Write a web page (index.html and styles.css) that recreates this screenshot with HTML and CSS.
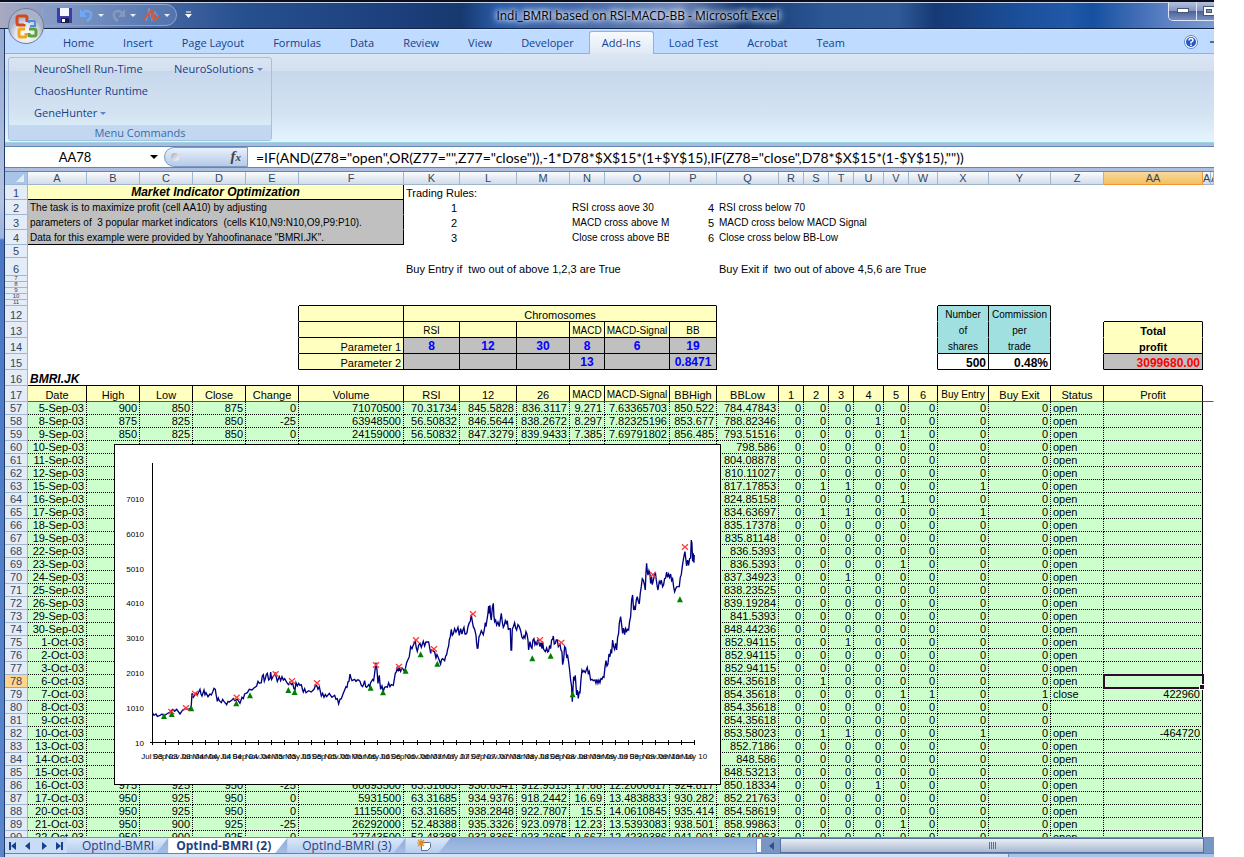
FILE: index.html
```html
<!DOCTYPE html>
<html lang="en">
<head>
  <meta charset="UTF-8" />
  <meta name="viewport" content="width=device-width, initial-scale=1.0"/>
  <title>Indi_BMRI based on RSI-MACD-BB - Microsoft Excel</title>
  <link rel="stylesheet" href="styles.css">
</head>
<body>
<div class="window">

<!-- Title bar -->
<header class="titlebar">
  <div class="quick">
    <button class="icon-btn" aria-label="Save">
      <svg width="15" height="15" viewBox="0 0 15 15"><path d="M0 0h15v15H1l-1-1z" fill="#3b3fa5"/><path d="M3 0h9v8H3z" fill="#f4f7fd"/><path d="M4 10h8v5H4z" fill="#1c1c4c"/><path d="M5 11h3v3H5z" fill="#fff"/></svg>
    </button>
    <button class="icon-btn" aria-label="Undo">
      <svg width="13" height="14" viewBox="0 0 13 14"><path d="M3 5c3-4 9-2 8 3-.4 2-2 4-4 5" fill="none" stroke="#6fa8f5" stroke-width="2.600"/><path d="M0 1v8h7z" fill="#6fa8f5"/></svg>
      <svg width="6" height="5" viewBox="0 0 6 5"><path d="M0 1h6L3 4z" fill="#e8eefa"/></svg>
    </button>
    <button class="icon-btn" aria-label="Redo">
      <svg width="13" height="14" viewBox="0 0 13 14"><path d="M10 5C7 1 1 3 2 8c.4 2 2 4 4 5" fill="none" stroke="#8399c0" stroke-width="2.600"/><path d="M13 1v8H6z" fill="#8399c0"/></svg>
      <svg width="6" height="5" viewBox="0 0 6 5"><path d="M0 1h6L3 4z" fill="#e8eefa"/></svg>
    </button>
    <button class="icon-btn" aria-label="Indicator">
      <svg width="15" height="14" viewBox="0 0 15 14"><path d="M2 13L5 1l3 11 3-8 3 5" fill="none" stroke="#6f9be6" stroke-width="1.400"/><path d="M0 12l4-6 3-4 1 8 3 2 4-4M9 1l1 8" fill="none" stroke="#e0562c" stroke-width="1.800"/></svg>
      <svg width="6" height="5" viewBox="0 0 6 5"><path d="M0 1h6L3 4z" fill="#e8eefa"/></svg>
    </button>
  </div>
  <button class="icon-btn customize" aria-label="Customize toolbar">
    <svg width="7" height="8" viewBox="0 0 7 8"><path d="M1 1h5" stroke="#fff"/><path d="M0 3h7L3.500 7z" fill="#fff"/></svg>
  </button>
  <h1>Indi_BMRI based on RSI-MACD-BB - Microsoft Excel</h1>
  <div class="win-buttons">
    <button aria-label="Minimize"><svg width="12" height="6" viewBox="0 0 12 6"><rect x=".5" y=".5" width="11" height="4" fill="#fff" stroke="#4a5573"/></svg></button>
    <button aria-label="Maximize"><svg width="13" height="10" viewBox="0 0 13 10"><rect x=".5" y=".5" width="12" height="9" fill="#fff" stroke="#4a5573"/><rect x="3.500" y="3.500" width="5" height="3" fill="#7f95bd" stroke="#4a5573"/></svg></button>
  </div>
</header>
<button class="office" aria-label="Office Button">
  <svg width="36" height="36" viewBox="0 0 36 36">
    <defs><radialGradient id="orb" cx="50%" cy="75%"><stop offset="0" stop-color="#fff"/><stop offset=".6" stop-color="#e3e6ee"/><stop offset="1" stop-color="#a9b2c8"/></radialGradient></defs>
    <circle cx="18" cy="18" r="17.500" fill="url(#orb)" stroke="#6f7c98"/>
    <path d="M16 16v1h-5q-2 0-2-2V10q0-2 2-2h6q2 0 2 2v4" fill="none" stroke="#d5481b" stroke-width="3"/>
    <path d="M21 15v-2h5q1 0 1 1v4h-5" fill="none" stroke="#4a8fd8" stroke-width="2"/>
    <path d="M17 21h-5q-1 0-1 1v5q0 2 2 2h4q1 0 1-1v-3" fill="none" stroke="#f3a81c" stroke-width="3"/>
    <path d="M21 21h5q2 0 2 2v3q0 2-2 2h-4q-1 0-1-1v-2" fill="none" stroke="#5ba23a" stroke-width="3"/>
  </svg>
</button>

<!-- Ribbon -->
<nav class="tabs">
  <a href="#">Home</a>
  <a href="#">Insert</a>
  <a href="#">Page Layout</a>
  <a href="#">Formulas</a>
  <a href="#">Data</a>
  <a href="#">Review</a>
  <a href="#">View</a>
  <a href="#">Developer</a>
  <a href="#" class="active">Add-Ins</a>
  <a href="#">Load Test</a>
  <a href="#">Acrobat</a>
  <a href="#">Team</a>
  <span class="tabs-right">
    <button class="icon-btn" aria-label="Help">
      <svg width="14" height="14" viewBox="0 0 14 14"><circle cx="7" cy="7" r="6.500" fill="#fff" stroke="#5d86c8"/><circle cx="7" cy="7" r="5" fill="#2458c4"/><path d="M5 5.500q0-2 2-2t2 1.800Q9 6.500 7 7.200V8.500M7 9.500v1.500" fill="none" stroke="#fff" stroke-width="1.500"/></svg>
    </button>
    <button class="icon-btn mini" aria-label="Minimize workbook"></button>
  </span>
</nav>
<div class="ribbon">
  <section class="group">
    <div class="commands">
      <button>NeuroShell Run-Time</button>
      <button>NeuroSolutions <i class="arrow"></i></button>
      <button>ChaosHunter Runtime</button>
      <button class="first-col">GeneHunter <i class="arrow"></i></button>
    </div>
    <h2>Menu Commands</h2>
  </section>
</div>

<!-- Formula bar -->
<div class="formula-bar">
  <input class="name-box" type="text" value="AA78" aria-label="Name Box" />
  <button class="name-drop" aria-label="Name list"><i class="arrow black"></i></button>
  <div class="fx"><i class="knob"></i><button aria-label="Insert Function">f<small>x</small></button></div>
  <input class="formula" type="text" aria-label="Formula" value='=IF(AND(Z78="open",OR(Z77="",Z77="close")),-1*D78*$X$15*(1+$Y$15),IF(Z78="close",D78*$X$15*(1-$Y$15),""))' />
</div>

<!-- Worksheet -->
<main class="sheet">
<table class="grid">
  <colgroup>
    <col class="w-head"><col class="w-date"><col class="w53"><col class="w53"><col class="w53"><col class="w53"><col class="w-vol">
    <col class="w56"><col class="w57"><col class="w53"><col class="w35"><col class="w65"><col class="w47"><col class="w62">
    <col class="w25"><col class="w25"><col class="w25"><col class="w30"><col class="w25"><col class="w29">
    <col class="w51"><col class="w62"><col class="w53"><col class="w99"><col class="w8"><col>
  </colgroup>
  <thead>
    <tr class="letters">
      <th class="corner"><i></i></th>
      <th>A</th><th>B</th><th>C</th><th>D</th><th>E</th><th>F</th><th>K</th><th>L</th><th>M</th><th>N</th><th>O</th><th>P</th><th>Q</th>
      <th>R</th><th>S</th><th>T</th><th>U</th><th>V</th><th>W</th><th>X</th><th>Y</th><th>Z</th><th class="sel">AA</th><th class="cut">AB</th><th class="cut">AC</th>
    </tr>
  </thead>
  <tbody>
    <tr class="r15"><th>1</th><td colspan="6" class="yellow title bb br">Market Indicator Optimization</td><td colspan="3">Trading Rules:</td><td colspan="16"></td></tr>
    <tr class="r15"><th>2</th><td colspan="6" class="gray br">The task is to maximize profit (cell AA10) by adjusting</td><td class="num">1</td><td></td><td></td><td colspan="2" class="small">RSI cross aove 30</td><td class="num">4</td><td colspan="8" class="small">RSI cross below 70</td><td colspan="5"></td></tr>
    <tr class="r15"><th>3</th><td colspan="6" class="gray br">parameters of&nbsp; 3 popular market indicators&nbsp; (cells K10,N9:N10,O9,P9:P10).</td><td class="num">2</td><td></td><td></td><td colspan="2" class="small">MACD cross above MACD Signal</td><td class="num">5</td><td colspan="8" class="small">MACD cross below MACD Signal</td><td colspan="5"></td></tr>
    <tr class="r15"><th>4</th><td colspan="6" class="gray bb br">Data for this example were provided by Yahoofinanace "BMRI.JK".</td><td class="num">3</td><td></td><td></td><td colspan="2" class="small">Close cross above BB-High</td><td class="num">6</td><td colspan="8" class="small">Close cross below BB-Low</td><td colspan="5"></td></tr>
    <tr class="r13"><th>5</th><td colspan="25"></td></tr>
    <tr class="r18"><th>6</th><td colspan="6"></td><td colspan="6">Buy Entry if&nbsp; two out of above 1,2,3 are True</td><td colspan="13">Buy Exit if&nbsp; two out of above 4,5,6 are True</td></tr>
    <tr class="r6"><th>7</th><td colspan="25"></td></tr>
    <tr class="r6"><th>8</th><td colspan="25"></td></tr>
    <tr class="r6"><th>9</th><td colspan="25"></td></tr>
    <tr class="r6"><th>10</th><td colspan="25"></td></tr>
    <tr class="r6"><th>11</th><td colspan="5"></td><td colspan="7" class="bb"></td><td colspan="7"></td><td colspan="2" class="bb"></td><td colspan="4"></td></tr>
    <tr class="r16"><th>12</th><td colspan="5" class="br"></td><td class="yellow bb br"></td><td colspan="6" class="yellow bb br mid">Chromosomes</td><td colspan="7" class="br"></td><td class="teal br mid">Number</td><td class="teal br mid">Commission</td><td></td><td class="bb"></td><td colspan="2"></td></tr>
    <tr class="r16"><th>13</th><td colspan="5" class="br"></td><td class="yellow bb br"></td><td class="yellow bb br mid small">RSI</td><td class="yellow bb br"></td><td class="yellow bb br"></td><td class="yellow bb br mid small">MACD</td><td class="yellow bb br mid small">MACD-Signal</td><td class="yellow bb br mid small">BB</td><td colspan="7" class="br"></td><td class="teal br mid">of</td><td class="teal br mid">per</td><td class="br"></td><td class="yellow br mid strong">Total</td><td colspan="2"></td></tr>
    <tr class="r16"><th>14</th><td colspan="5" class="br"></td><td class="yellow bb br num">Parameter 1</td><td class="param">8</td><td class="param">12</td><td class="param">30</td><td class="param">8</td><td class="param">6</td><td class="param">19</td><td colspan="7" class="br"></td><td class="teal bb br mid">shares</td><td class="teal bb br mid">trade</td><td class="br"></td><td class="yellow bb br mid strong">profit</td><td colspan="2"></td></tr>
    <tr class="r16"><th>15</th><td colspan="5" class="br"></td><td class="yellow bb br num">Parameter 2</td><td class="param"></td><td class="param"></td><td class="param"></td><td class="param">13</td><td class="param"></td><td class="param">0.8471</td><td colspan="7" class="br"></td><td class="big bb br num">500</td><td class="big bb br num">0.48%</td><td class="br"></td><td class="gray big red bb br num">3099680.00</td><td colspan="2"></td></tr>
    <tr class="r16"><th>16</th><td colspan="23" class="symbol bb">BMRI.JK</td><td colspan="2"></td></tr>
    <tr class="r16 heads"><th>17</th><td>Date</td><td>High</td><td>Low</td><td>Close</td><td>Change</td><td>Volume</td><td>RSI</td><td>12</td><td>26</td><td class="small">MACD</td><td class="small">MACD-Signal</td><td>BBHigh</td><td>BBLow</td><td>1</td><td>2</td><td>3</td><td>4</td><td>5</td><td>6</td><td class="small">Buy Entry</td><td>Buy Exit</td><td>Status</td><td>Profit</td><td class="plain" colspan="2"></td></tr>
  </tbody>
  <tbody id="rows"></tbody>
</table>

<!-- Price chart floating over the cells -->
<svg class="chart" width="607" height="341" viewBox="0 0 607 341" role="img" aria-label="BMRI.JK price">
  <rect x=".5" y=".5" width="606" height="340" fill="#fff" stroke="#000"/>
  <path d="M38.500 19V301M36 298.500H581" stroke="#000" fill="none"/>
  <g id="yLabels"></g>
  <g id="xLabels"></g>
  <g transform="translate(0 196) scale(.3333)">
    <g transform="translate(-342 0)">
    <polyline class="price" points="457,218 462,226 468,222 472,229 480,226 486,222 492,228 500,222 510,216 518,208 524,214 530,208 540,222 548,210 556,206 565,208 572,204 574,195 576,160 580,172 588,160 592,165 600,148 603,162 606,168 612,150 615,164 618,158 624,170 630,162 634,165 638,156 642,145 646,148 648,162 652,184 655,174 658,182 664,188 668,178 672,184 680,194 684,184 688,186 696,180 700,176 704,182 712,178 720,190 726,172 730,176 734,162 742,158 748,148 756,150 762,144 770,138 774,124 778,130 784,128 787,108 790,104 793,124 796,116 799,104 802,100 806,120 810,116 812,96 815,118 818,112 826,100 832,124 838,110 842,122 846,110 850,120 854,116 862,130 866,134 870,126 874,134 878,130 882,146 885,150 888,128 892,138 896,130 900,136 904,134 908,150 910,156 914,146 918,158 926,152 934,156 942,148 946,138 950,136 954,148 958,140 964,168 968,160 972,172 976,164 980,170 988,160 992,166 996,172 1004,166 1008,178 1012,176 1016,192 1020,178 1024,176 1030,160 1034,150 1038,140 1041,142 1044,126 1047,124 1050,102 1053,114 1056,122 1064,118 1068,124 1072,120 1076,120 1080,124 1084,136 1088,140 1091,132 1094,122 1097,140 1100,142 1106,134 1109,140 1112,128 1118,118 1121,122 1124,100 1128,68 1131,90 1134,130 1138,106 1140,130 1142,148 1146,138 1150,154 1154,142 1158,140 1162,142 1166,128 1170,140 1174,134 1180,136 1186,100 1189,96 1192,80 1195,94 1198,84 1202,94 1206,84 1210,88 1214,96 1220,68 1228,50 1232,20 1236,26 1240,15 1246,4 1249,24 1252,34 1256,16 1260,10 1264,22 1270,4 1274,18 1278,6 1286,6 1289,22 1292,40 1295,30 1298,32 1304,36 1308,54 1311,44 1314,50 1322,72 1325,58 1328,56 1334,62 1337,48 1340,44 1343,28 1346,18 1348,0 1351,-10 1354,-32 1357,-14 1360,-18 1364,-34 1368,-24 1371,-30 1374,-38 1378,-14 1382,-34 1386,-18 1389,-30 1392,-38 1395,-18 1398,-18 1401,-22 1404,-40 1408,-52 1411,-56 1414,-76 1417,-56 1420,-40 1424,-32 1428,-15 1430,10 1432,25 1434,24 1437,-10 1440,-15 1444,-28 1447,-22 1450,-16 1453,-30 1456,-52 1458,-40 1461,-60 1464,-80 1466,-102 1468,-80 1470,-104 1472,-70 1474,-60 1477,-96 1480,-110 1482,-70 1484,-55 1487,-60 1490,-45 1494,-54 1498,-40 1501,-60 1504,-80 1507,-54 1510,-38 1513,-44 1516,-58 1519,-50 1522,-58 1525,-32 1528,-34 1531,-34 1533,30 1535,30 1537,-32 1540,-40 1544,-52 1547,-36 1550,-30 1554,-46 1558,-40 1562,-28 1566,-8 1569,-4 1572,-12 1575,-6 1578,-25 1581,-18 1584,0 1586,30 1590,5 1593,20 1596,25 1599,0 1602,-4 1605,14 1608,6 1611,16 1614,-2 1617,8 1620,20 1623,8 1626,26 1628,5 1631,28 1636,35 1640,24 1643,36 1646,34 1649,16 1652,26 1655,0 1658,-2 1660,-12 1663,12 1666,10 1669,0 1672,0 1675,20 1680,12 1683,30 1686,35 1688,74 1691,60 1694,20 1697,24 1700,50 1703,46 1706,66 1709,90 1712,120 1715,140 1717,185 1719,150 1721,110 1724,122 1726,106 1728,136 1730,165 1732,150 1735,175 1738,154 1740,160 1743,120 1746,90 1749,96 1752,92 1756,98 1759,90 1762,82 1765,100 1768,94 1772,120 1776,118 1780,122 1785,120 1788,130 1791,118 1794,130 1797,120 1800,128 1803,116 1806,118 1809,110 1812,112 1815,82 1818,62 1821,78 1824,72 1827,42 1830,50 1833,28 1835,40 1838,0 1841,20 1844,28 1847,10 1850,30 1853,-8 1856,-20 1858,-50 1862,-70 1865,-46 1868,-20 1871,-36 1874,-16 1877,-34 1880,-26 1883,-32 1886,-30 1889,-56 1892,-70 1895,-120 1898,-135 1901,-90 1904,-98 1906,-90 1909,-120 1912,-130 1915,-116 1918,-108 1921,-140 1924,-160 1927,-184 1930,-180 1933,-168 1936,-150 1938,-200 1940,-230 1942,-206 1944,-195 1947,-208 1950,-198 1952,-170 1955,-190 1957,-166 1960,-178 1963,-192 1966,-204 1969,-180 1972,-160 1974,-150 1978,-176 1981,-170 1984,-180 1988,-160 1991,-166 1994,-184 1997,-186 2000,-204 2003,-188 2006,-198 2009,-188 2012,-198 2015,-178 2018,-184 2021,-160 2024,-145 2028,-156 2031,-160 2038,-160 2041,-188 2044,-196 2047,-220 2050,-240 2053,-256 2055,-265 2058,-240 2060,-222 2063,-240 2066,-224 2069,-244 2072,-246 2074,-300 2076,-290 2078,-236 2080,-260 2082,-232 2083,-255"/>
    <g id="sells"></g>
    <g id="buys"></g>
    </g>
  </g>
</svg>
</main>

<!-- Sheet tabs and horizontal scroll bar -->
<footer class="sheet-bar">
  <div class="nav-arrows">
    <button aria-label="First sheet"><svg width="8" height="8" viewBox="0 0 8 8"><path d="M0 0h2v8H0zM7 0v8L2 4z"/></svg></button>
    <button aria-label="Previous sheet"><svg width="8" height="8" viewBox="0 0 8 8"><path d="M6 0v8L1 4z"/></svg></button>
    <button aria-label="Next sheet"><svg width="8" height="8" viewBox="0 0 8 8"><path d="M2 0v8l5-4z"/></svg></button>
    <button aria-label="Last sheet"><svg width="8" height="8" viewBox="0 0 8 8"><path d="M1 0v8l5-4zM6 0h2v8H6z"/></svg></button>
  </div>
  <a href="#" class="sheet-tab">OptInd-BMRI</a>
  <a href="#" class="sheet-tab current">OptInd-BMRI (2)</a>
  <a href="#" class="sheet-tab">OptInd-BMRI (3)</a>
  <button class="sheet-tab add" aria-label="Insert Worksheet">
    <svg width="15" height="13" viewBox="0 0 15 13"><path d="M4.500 3.500h8q1 0 1 1v4l-3 3h-6z" fill="#fff" stroke="#5a6f97"/><path d="M4 0v8M0 4h8M1 1l6 6M7 1L1 7" stroke="#e38a1e" stroke-width="1.200"/></svg>
  </button>
  <div class="hscroll">
    <i class="split"></i>
    <button class="scroll-left" aria-label="Scroll left"><svg width="5" height="8" viewBox="0 0 5 8"><path d="M5 0v8L0 4z" fill="#2f4f86"/></svg></button>
    <div class="thumb"><i></i><i></i><i></i><i></i></div>
  </div>
</footer>
<div class="status"><span class="views"></span></div>

</div>
<script src="script.js"></script>
</body>
</html>
```

FILE: styles.css
```css
body {
  margin: 0;
  background: #fff;
  font-family: "Open Sans", "Noto Sans", sans-serif;
  font-size: 11px;
  color: #000;
}
button, input {
  margin: 0;
  padding: 0;
  border: none;
  background: none;
  font: inherit;
  color: inherit;
}
a {
  color: inherit;
  text-decoration: none;
}
svg {
  display: block;
}
.window {
  position: relative;
  display: flex;
  flex-direction: column;
  box-sizing: border-box;
  height: 100vh;
  margin-right: 30px;
  padding-left: 5px;
  overflow: hidden;
  background: linear-gradient(90deg, transparent 4px, #1f3a68 4px, #1f3a68 5px, transparent 5px),
    linear-gradient(#8fa3cb, #b5c4e2 200px, #9db4de 238px, #4a78c4 240px, #5b86cc);
}

/* Title bar */
.titlebar {
  display: flex;
  align-items: center;
  height: 29px;
  margin-left: -5px;
  box-sizing: border-box;
  border-top: 2px solid #0a0d1c;
  border-bottom: 1px solid #13264c;
  box-shadow: inset 0 1px #c8d4ea;
  background: linear-gradient(90deg, #a9a9c2, #8196c0 5%, #4a6ba5 12%, #27508f 20%, #1c3f7c 33%, #16396f 38%, #2a5ba9 41%, #4468a8 48%, #6b82b5 56%, #173a74 61%, #2b5794 68%, #2f5a97 74%, #163a75 77%, #1b4f9a 84%, #2158a8 88%, #1650a0 90%, #5b80c4 96%, #7d9bd2);
}
.quick {
  display: flex;
  align-items: center;
  gap: 8px;
  height: 20px;
  margin-left: 42px;
  padding: 0 6px 0 14px;
  border: 1px solid #8da4cc;
  border-radius: 4px 11px 11px 4px;
  background: rgba(130, 160, 210, 0.3);
}
.icon-btn {
  display: flex;
  align-items: center;
  gap: 5px;
}
.customize {
  margin-left: 8px;
}
.titlebar h1 {
  flex: 1;
  margin: 0;
  padding-right: 84px;
  text-align: center;
  font-size: 12px;
  font-weight: normal;
  white-space: nowrap;
  text-shadow: 0 0 4px #dfe8f8, 0 0 6px #dfe8f8, 0 0 8px #c9d7f0, 0 0 10px #c9d7f0;
}
.win-buttons {
  display: flex;
  align-self: flex-start;
  height: 18px;
  border-left: 1px solid #dfe6f5;
  border-bottom: 1px solid #dfe6f5;
  border-radius: 0 0 0 5px;
  overflow: hidden;
}
.win-buttons button {
  display: flex;
  align-items: center;
  justify-content: center;
  width: 28px;
  border-right: 1px solid #dfe6f5;
  background: linear-gradient(#b4c0dc, #8395c0 50%, #4e6299 52%, #7a8fc0);
}
.win-buttons button:last-child {
  width: 17px;
  padding-left: 7px;
  border-right: none;
}
.win-buttons button:last-child svg {
  flex: none;
}
.office {
  position: absolute;
  left: 8px;
  top: 8px;
}

/* Ribbon */
.tabs {
  display: flex;
  align-items: flex-end;
  gap: 1px;
  height: 24px;
  padding-left: 44px;
  border-top: 1px solid #cfe2ff;
  background: #bfdbff;
  box-shadow: inset 0 -1px #8db2e3;
  color: #15428b;
}
.tabs a {
  padding: 0 14px;
  line-height: 22px;
  white-space: nowrap;
}
.tabs .active {
  box-sizing: border-box;
  height: 23px;
  padding: 0 12px;
  border: 1px solid #8db2e3;
  border-bottom: none;
  border-radius: 3px 3px 0 0;
  background: linear-gradient(#f7fafe, #dfe9f5);
}
.tabs-right {
  display: flex;
  align-items: center;
  gap: 12px;
  height: 24px;
  margin-left: auto;
}
.mini {
  width: 4px;
  height: 2px;
  background: #5b6a80;
}
.ribbon {
  height: 89px;
  padding: 3px;
  box-sizing: border-box;
  border-bottom: 1px solid #9ed3e6;
  background: linear-gradient(#dbe6f4, #d3dfef 17px, #c7d8ed 17px, #d4e3f2 60px, #e3f5fe);
}
.group {
  display: flex;
  flex-direction: column;
  justify-content: space-between;
  width: 262px;
  height: 82px;
  border: 1px solid #a6c0df;
  border-radius: 3px;
}
.commands {
  display: grid;
  grid-template-columns: 140px auto;
  padding-left: 25px;
  justify-items: start;
  color: #15428b;
}
.commands button {
  height: 22px;
  padding-bottom: 2px;
  white-space: nowrap;
}
.first-col {
  grid-column: 1;
}
.arrow {
  display: inline-block;
  border: 3px solid transparent;
  border-top-color: #5c86c4;
  border-bottom: none;
  vertical-align: middle;
}
.arrow.black {
  border-width: 4px;
  border-top-color: #000;
  border-bottom: none;
}
.group h2 {
  margin: 0;
  font-size: 11px;
  font-weight: normal;
  line-height: 15px;
  text-align: center;
  color: #3e6aaa;
  background: #c1d8f0;
}

/* Formula bar */
.formula-bar {
  display: flex;
  flex: none;
  height: 20px;
  margin-top: 3px;
  border-top: 1px solid #5d87b5;
  border-bottom: 1px solid #5d87b5;
  background: #fff;
  font-family: Lato, "Open Sans", sans-serif;
  font-size: 13px;
}
.name-box {
  width: 140px;
  text-align: center;
}
.name-drop {
  display: flex;
  align-items: center;
  justify-content: center;
  width: 18px;
}
.fx {
  display: flex;
  align-items: center;
  justify-content: space-between;
  box-sizing: border-box;
  width: 84px;
  margin-left: 1px;
  padding: 0 6px;
  border: 1px solid #7d9cc4;
  border-radius: 10px 0 0 10px;
  background: linear-gradient(#e8f0fb, #b5cae8);
}
.fx button {
  color: #444;
  font: italic bold 15px "Liberation Serif", serif;
  line-height: 15px;
}
.fx small {
  font-size: 11px;
}
.knob {
  width: 8px;
  height: 8px;
  border-radius: 50%;
  background: linear-gradient(135deg, #a3a9b8, #fff);
}
.formula {
  flex: 1;
  min-width: 0;
  padding-left: 8px;
  font-size: 14px;
}

/* Worksheet */
.sheet {
  position: relative;
  flex: 1;
  min-height: 0;
  margin-top: 3px;
  overflow: hidden;
  border-top: 1px solid #5d87b5;
  background: #fff;
  font-family: "Liberation Sans", Arial, sans-serif;
}
.grid {
  width: 100%;
  table-layout: fixed;
  border-spacing: 0;
  line-height: 12px;
}
.w-head { width: 23px; }
.w-date { width: 59px; }
.w-vol { width: 105px; }
.w8 { width: 8px; }
.w25 { width: 25px; }
.w29 { width: 29px; }
.w30 { width: 30px; }
.w35 { width: 35px; }
.w47 { width: 47px; }
.w51 { width: 51px; }
.w53 { width: 53px; }
.w56 { width: 56px; }
.w57 { width: 57px; }
.w62 { width: 62px; }
.w65 { width: 65px; }
.w99 { width: 99px; }
.grid th, .grid td {
  box-sizing: border-box;
  padding: 0 2px;
  border: 0 solid transparent;
  border-width: 0 1px 1px 0;
  overflow: hidden;
  white-space: nowrap;
  text-align: left;
  vertical-align: bottom;
}
.grid th {
  padding: 0;
  border-color: #9eb6ce;
  background: #e4ecf7;
  font-weight: normal;
  text-align: center;
  color: #33475f;
}
.grid .letters th {
  height: 13px;
  background: linear-gradient(#f9fcfd, #d3dbe9);
}
.grid .letters .corner {
  background: #a9c4e9;
}
.corner i {
  display: block;
  width: 0;
  margin: 0 3px 2px auto;
  border: 4px solid transparent;
  border-right-color: #e4ecf7;
  border-bottom-color: #e4ecf7;
}
.grid .letters .sel {
  border-color: #f29536;
  background: linear-gradient(#f9d99f, #f1c15f);
}
.grid .letters .cut {
  text-align: left;
}
.grid .picked th {
  border-color: #f29536;
  background: #ffd58d;
}
.r6 { height: 6px; font-size: 6px; line-height: 5px; }
.r13 { height: 13px; }
.r15 { height: 15px; }
.r16 { height: 16px; }
.r18 { height: 18px; }
.grid .num { text-align: right; }
.grid .mid { text-align: center; padding: 0; }
.grid .bb { border-bottom-color: #000; }
.grid .br { border-right-color: #000; }
.yellow { background: #ffffc0; }
.gray { background: #c0c0c0; }
.teal { background: #a0e0e0; }
.small, .gray, .teal { font-size: 10px; }
.strong { font-weight: bold; }
.big { font-size: 12px; font-weight: bold; }
.red { color: #f00; }
.grid .title {
  font-size: 12px;
  font-style: italic;
  font-weight: bold;
  line-height: 14px;
  text-align: center;
}
.grid .symbol {
  font-size: 12px;
  font-style: italic;
  font-weight: bold;
}
.grid .param {
  padding: 0;
  border-color: #000;
  background: #c0c0c0;
  font-size: 12px;
  font-weight: bold;
  line-height: 14px;
  text-align: center;
  color: #00f;
}
.grid .heads td {
  padding: 0;
  border-right-color: #000;
  border-bottom-color: #5a5a5a;
  background: #ffffc0;
  text-align: center;
}
.grid .heads .plain {
  border-right-color: transparent;
  background: #fff;
}
.grid .data td {
  border-color: #000;
  border-style: dotted;
  background: #cfc;
  text-align: right;
}
.grid .data .status-cell {
  text-align: left;
}
.grid .data .profit {
  border-right-style: solid;
}
.grid .data .blank {
  border: none;
  background: #fff;
}
.grid .picked .profit {
  position: relative;
  overflow: visible;
  outline: 2px solid #2b0a2b;
  outline-offset: -1px;
}
/* fill handle of the selected cell */
.picked .profit::after {
  content: "";
  position: absolute;
  right: -3px;
  bottom: -3px;
  width: 4px;
  height: 4px;
  border: 1px solid #fff;
  background: #2b0a2b;
}

/* Chart */
.chart {
  position: absolute;
  left: 109px;
  top: 272px;
  font-size: 8px;
}
.price {
  fill: none;
  stroke: #000080;
  stroke-width: 4;
}
.sell {
  fill: none;
  stroke: #ff3b3b;
  stroke-width: 4;
}
.buy {
  fill: #008000;
}

/* Sheet tabs */
.sheet-bar {
  display: flex;
  flex: none;
  height: 15px;
  border-top: 1px solid #6d8fc0;
  background: linear-gradient(#8faddb, #a4bfe4);
  font-size: 12px;
  color: #1f4080;
}
.nav-arrows {
  display: flex;
  align-items: center;
  justify-content: space-around;
  width: 62px;
  background: #c9dcf5;
  fill: #15428b;
}
.sheet-tab {
  padding: 0 14px 0 15px;
  clip-path: polygon(0 0, 100% 0, calc(100% - 12px) 100%, 0 100%);
  background: linear-gradient(#dbe8f9, #b4cdee);
  line-height: 15px;
  white-space: nowrap;
}
.sheet-tab.current {
  padding: 0 16px 0 8px;
  background: #fff;
  font-weight: bold;
}
.sheet-tab.add {
  padding: 0 18px 0 12px;
}
.hscroll {
  display: flex;
  flex: 0 1 458px;
  margin-left: auto;
  background: #7896c4;
}
.split {
  width: 4px;
  border: 1px solid #7896c4;
  background: #fff;
}
.scroll-left {
  display: flex;
  align-items: center;
  justify-content: center;
  width: 18px;
}
.thumb {
  display: flex;
  flex: 1;
  align-items: center;
  justify-content: center;
  gap: 1px;
  margin-right: 10px;
  border: 1px solid #54709f;
  background: linear-gradient(#e9eef5, #c3cede 60%, #a9b8d0);
}
.thumb i {
  width: 1px;
  height: 7px;
  background: #5d6f8c;
}
.status {
  display: flex;
  justify-content: flex-end;
  flex: none;
  height: 3px;
  border-top: 1px solid #5d87b5;
  background: #d3e4f8;
}
.views {
  width: 205px;
  border-left: 1px solid #6d8fc0;
  background: #a9c4e9;
}
```

FILE: script.js
```js
// row | date | high low close change volume rsi ema12 ema26 macd signal bbhigh | bblow | flags 1-6, entry, exit | status | profit
const data = `
57|5-Sep-03|900 850 875 0 71070500 70.31734 845.5828 836.3117 9.271 7.63365703 850.522|784.47843|00000000|open|
58|8-Sep-03|875 825 850 -25 63948500 56.50832 846.5644 838.2672 8.297 7.82325196 853.677|788.82346|00010000|open|
59|9-Sep-03|850 825 850 0 24159000 56.50832 847.3279 839.9433 7.385 7.69791802 856.485|793.51516|00001000|open|
60|10-Sep-03||798.586|00000000|open|
61|11-Sep-03||804.08878|00000000|open|
62|12-Sep-03||810.11027|00000000|open|
63|15-Sep-03||817.17853|01100010|open|
64|16-Sep-03||824.85158|00001000|open|
65|17-Sep-03||834.63697|01100010|open|
66|18-Sep-03||835.17378|00000000|open|
67|19-Sep-03||835.81148|00000000|open|
68|22-Sep-03||836.5393|00000000|open|
69|23-Sep-03||836.5393|00001000|open|
70|24-Sep-03||837.34923|00100000|open|
71|25-Sep-03||838.23525|00000000|open|
72|26-Sep-03||839.19284|00000000|open|
73|29-Sep-03||841.5393|00000000|open|
74|30-Sep-03||848.44236|00000000|open|
75|1-Oct-03||852.94115|00100000|open|
76|2-Oct-03||852.94115|00000000|open|
77|3-Oct-03||852.94115|00000000|open|
78|6-Oct-03||854.35618|01000000|open|
79|7-Oct-03||854.35618|00001101|close|422960
80|8-Oct-03||854.35618|00000000||
81|9-Oct-03||854.35618|00000000||
82|10-Oct-03||853.58023|01100010|open|-464720
83|13-Oct-03||852.7186|00000000|open|
84|14-Oct-03||848.586|00000000|open|
85|15-Oct-03||848.53213|00000000|open|
86|16-Oct-03|975 925 950 -25 60693500 63.31685 930.6341 912.9515 17.68 12.2000617 924.817|850.18334|00010000|open|
87|17-Oct-03|950 925 950 0 5931500 63.31685 934.9376 918.2442 16.69 13.4838833 930.282|852.21763|00000000|open|
88|20-Oct-03|950 925 950 0 11155000 63.31685 938.2848 922.7807 15.5 14.0610845 935.414|854.58619|00000000|open|
89|21-Oct-03|950 900 925 -25 26292000 52.48388 935.3326 923.0978 12.23 13.5393083 938.501|858.99863|00001000|open|
90|22-Oct-03|950 900 925 0 27743500 52.48388 932.8365 923.2695 9.667 12.4239386 941.001|861.49063|00000000|open|
`;

const td = (text) => `<td>${text}</td>`;

document.getElementById("rows").innerHTML = data.trim().split("\n").map((line) => {
  const [row, date, prices, low, flags, status, profit] = line.split("|");
  const cells = prices ? prices.split(" ") : Array(11).fill("");
  return `<tr class="r13 data${row === "78" ? " picked" : ""}"><th>${row}</th>` +
    td(date) + cells.map(td).join("") + td(low) + [...flags].map(td).join("") +
    `<td class="status-cell">${status}</td><td class="profit">${profit}</td><td class="blank" colspan="2"></td></tr>`;
}).join("");

// Chart axes
let yLabels = "";
for (let i = 0; i < 8; i++) {
  yLabels += `<text x="30" y="${Math.round(302 - i * 34.9)}" text-anchor="end">${i * 1000 + 10}</text>`;
}
document.getElementById("yLabels").innerHTML = yLabels;

const months = ["Jan", "Mar", "May", "Jul", "Sep", "Nov"];
let xLabels = "";
for (let i = 0; i <= 41; i++) {
  const x = Math.round(38 + i * 13.23);
  const year = String(3 + Math.floor((i + 3) / 6)).padStart(2, "0");
  xLabels += `<path d="M${x + 0.5} 296v5" stroke="#000"/>` +
    `<text x="${x}" y="315" text-anchor="middle">${months[(i + 3) % 6]} ${year}</text>`;
}
document.getElementById("xLabels").innerHTML = xLabels;

// Trade signals
const sells = [[514, 215], [558, 204], [585, 161], [710, 172], [827, 102], [876, 123], [951, 129], [1128, 75], [1197, 80],
  [1248, 0], [1302, 27], [1419, -78], [1620, 0], [1684, 8], [1959, -196], [2055, -279]];
const buys = [[492, 228], [515, 222], [574, 205], [709, 190], [750, 166], [865, 150], [884, 156], [1112, 143], [1149, 157],
  [1217, 92], [1262, 43], [1312, 71], [1597, 55], [1652, 47], [1718, 163], [2040, -122]];

document.getElementById("sells").innerHTML = sells
  .map(([x, y]) => `<path class="sell" d="M${x - 9} ${y - 8}l18 16m0-16l-18 16"/>`).join("");
document.getElementById("buys").innerHTML = buys
  .map(([x, y]) => `<path class="buy" d="M${x} ${y - 9}l9 18h-18z"/>`).join("");
```
